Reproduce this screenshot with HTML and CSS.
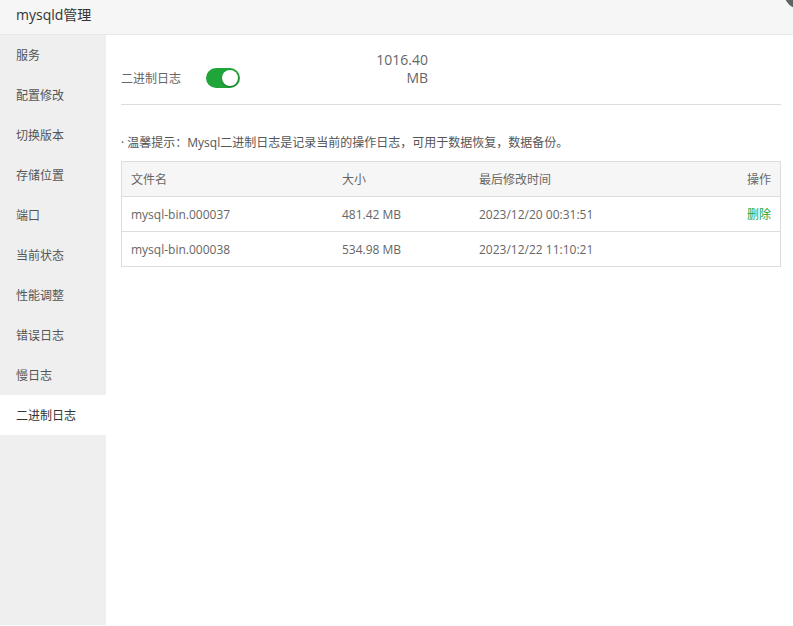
FILE: index.html
```html
<!DOCTYPE html>
<html lang="zh-CN">
<head>
<meta charset="utf-8">
<title>mysqld管理</title>
<link rel="stylesheet" href="styles.css">
</head>
<body>
<div class="window">
  <div class="titlebar">mysqld管理</div>
  <span class="close-btn"></span>
  <div class="main">
    <ul class="sidebar">
      <li>服务</li>
      <li>配置修改</li>
      <li>切换版本</li>
      <li>存储位置</li>
      <li>端口</li>
      <li>当前状态</li>
      <li>性能调整</li>
      <li>错误日志</li>
      <li>慢日志</li>
      <li class="active">二进制日志</li>
    </ul>
    <div class="content">
      <div class="status-row">
        <span class="status-label">二进制日志</span>
        <span class="switch"><span class="knob"></span></span>
        <div class="size">1016.40<br>MB</div>
      </div>
      <p class="tip">· 温馨提示：Mysql二进制日志是记录当前的操作日志，可用于数据恢复，数据备份。</p>
      <table class="log-table">
        <thead>
          <tr><th class="c1">文件名</th><th class="c2">大小</th><th>最后修改时间</th><th class="op">操作</th></tr>
        </thead>
        <tbody>
          <tr><td>mysql-bin.000037</td><td>481.42 MB</td><td>2023/12/20 00:31:51</td><td class="op"><a class="del">删除</a></td></tr>
          <tr><td>mysql-bin.000038</td><td>534.98 MB</td><td>2023/12/22 11:10:21</td><td class="op"></td></tr>
        </tbody>
      </table>
    </div>
  </div>
</div>
</body>
</html>
```

FILE: styles.css
```css
html, body {
  margin: 0;
  padding: 0;
  background: #fff;
}
body {
  font-family: "Open Sans", "Noto Sans CJK SC", sans-serif;
  color: #666;
  overflow: hidden;
}
.window {
  position: relative;
  width: 793px;
  height: 626px;
  display: flex;
  flex-direction: column;
  overflow: hidden;
}
.titlebar {
  height: 34px;
  line-height: 30px;
  padding-left: 16px;
  background: #f6f6f6;
  border-bottom: 1px solid #e8e8e8;
  font-size: 14px;
  color: #333;
}
.close-btn {
  position: absolute;
  left: 783px;
  top: -30px;
  width: 40px;
  height: 40px;
  border-radius: 50%;
  background: #626262;
}
.main {
  flex: 1;
  display: flex;
}
.sidebar {
  list-style: none;
  margin: 0;
  padding: 0;
  width: 106px;
  background: #efefef;
  height: 590px;
}
.sidebar li {
  height: 39px;
  padding-top: 1px;
  line-height: 40px;
  padding-left: 16px;
  font-size: 12px;
  color: #555;
}
.sidebar li.active {
  background: #fff;
  color: #333;
}
.content {
  flex: 1;
  padding: 16px 12px 0 15px;
}
.status-row {
  display: flex;
  align-items: flex-end;
  padding-bottom: 16px;
  border-bottom: 1px solid #ddd;
}
.status-label {
  font-size: 12px;
  line-height: 20px;
  color: #666;
  margin-bottom: -1px;
}
.switch {
  position: relative;
  width: 34px;
  height: 20px;
  border-radius: 10px;
  background: #20a53a;
  margin-left: 25px;
}
.knob {
  position: absolute;
  right: 2px;
  top: 2px;
  width: 16px;
  height: 16px;
  border-radius: 50%;
  background: #fff;
  box-shadow: 0 1px 2px rgba(0,0,0,0.3);
}
.size {
  width: 188px;
  text-align: right;
  font-size: 14px;
  line-height: 18px;
  color: #666;
  margin-bottom: 1px;
}
.tip {
  margin: 28px 0 8px 0;
  font-size: 12px;
  line-height: 20px;
  color: #555;
}
.log-table {
  width: 100%;
  border-collapse: collapse;
  border: 1px solid #ddd;
  font-size: 12px;
  color: #666;
}
.log-table th, .log-table td {
  height: 34px;
  padding: 0 9px;
  text-align: left;
  font-weight: normal;
  border-bottom: 1px solid #ddd;
}
.log-table th {
  background: #f6f6f6;
}
.log-table .c1 {
  width: 193px;
}
.log-table .c2 {
  width: 119px;
}
.log-table .op {
  text-align: right;
}
.del {
  color: #20a53a;
  cursor: pointer;
}
```
